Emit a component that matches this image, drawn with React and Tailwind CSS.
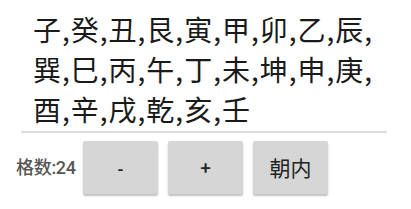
import React from 'react';

const ORDER = '子,癸,丑,艮,寅,甲,卯,乙,辰,巽,巳,丙,午,丁,未,坤,申,庚,酉,辛,戌,乾,亥,壬';

const Btn = ({ children, className = '' }) => (
    <button
        className={`w-[75px] h-[53px] bg-[#d6d6d6] rounded-[2px] shadow-[0_2px_2px_rgba(0,0,0,0.25)] text-[#222] ${className}`}
    >
        {children}
    </button>
);

export default function App() {
    return (
        <div
            className="w-[411px] h-[209px] bg-white overflow-hidden"
            style={{ fontFamily: '"Noto Sans CJK SC", Roboto, sans-serif' }}
        >
            {/* Text field */}
            <div className="pl-[21px] pr-[24px] pt-[9px]">
                <div className="pl-[12px] text-[28px] leading-[40px] tracking-[1px] text-[#1a1a1a] pb-[2px]">
                    {ORDER}
                </div>
                <div className="h-[2px] bg-[#dcdcdc]" />
            </div>

            {/* Controls */}
            <div className="flex items-center pl-[16px] pt-[8px]">
                <span
                    className="text-[18px] font-medium text-[#555] w-[67px] tracking-[-0.3px]"
                    style={{ fontFamily: 'Roboto, "Noto Sans CJK SC", sans-serif' }}
                >
                    格数:24
                </span>
                <div className="flex gap-[10px]">
                    <Btn className="text-[16px] font-bold">-</Btn>
                    <Btn className="text-[18px] font-bold">+</Btn>
                    <Btn className="text-[21px]">朝内</Btn>
                </div>
            </div>
        </div>
    );
}
